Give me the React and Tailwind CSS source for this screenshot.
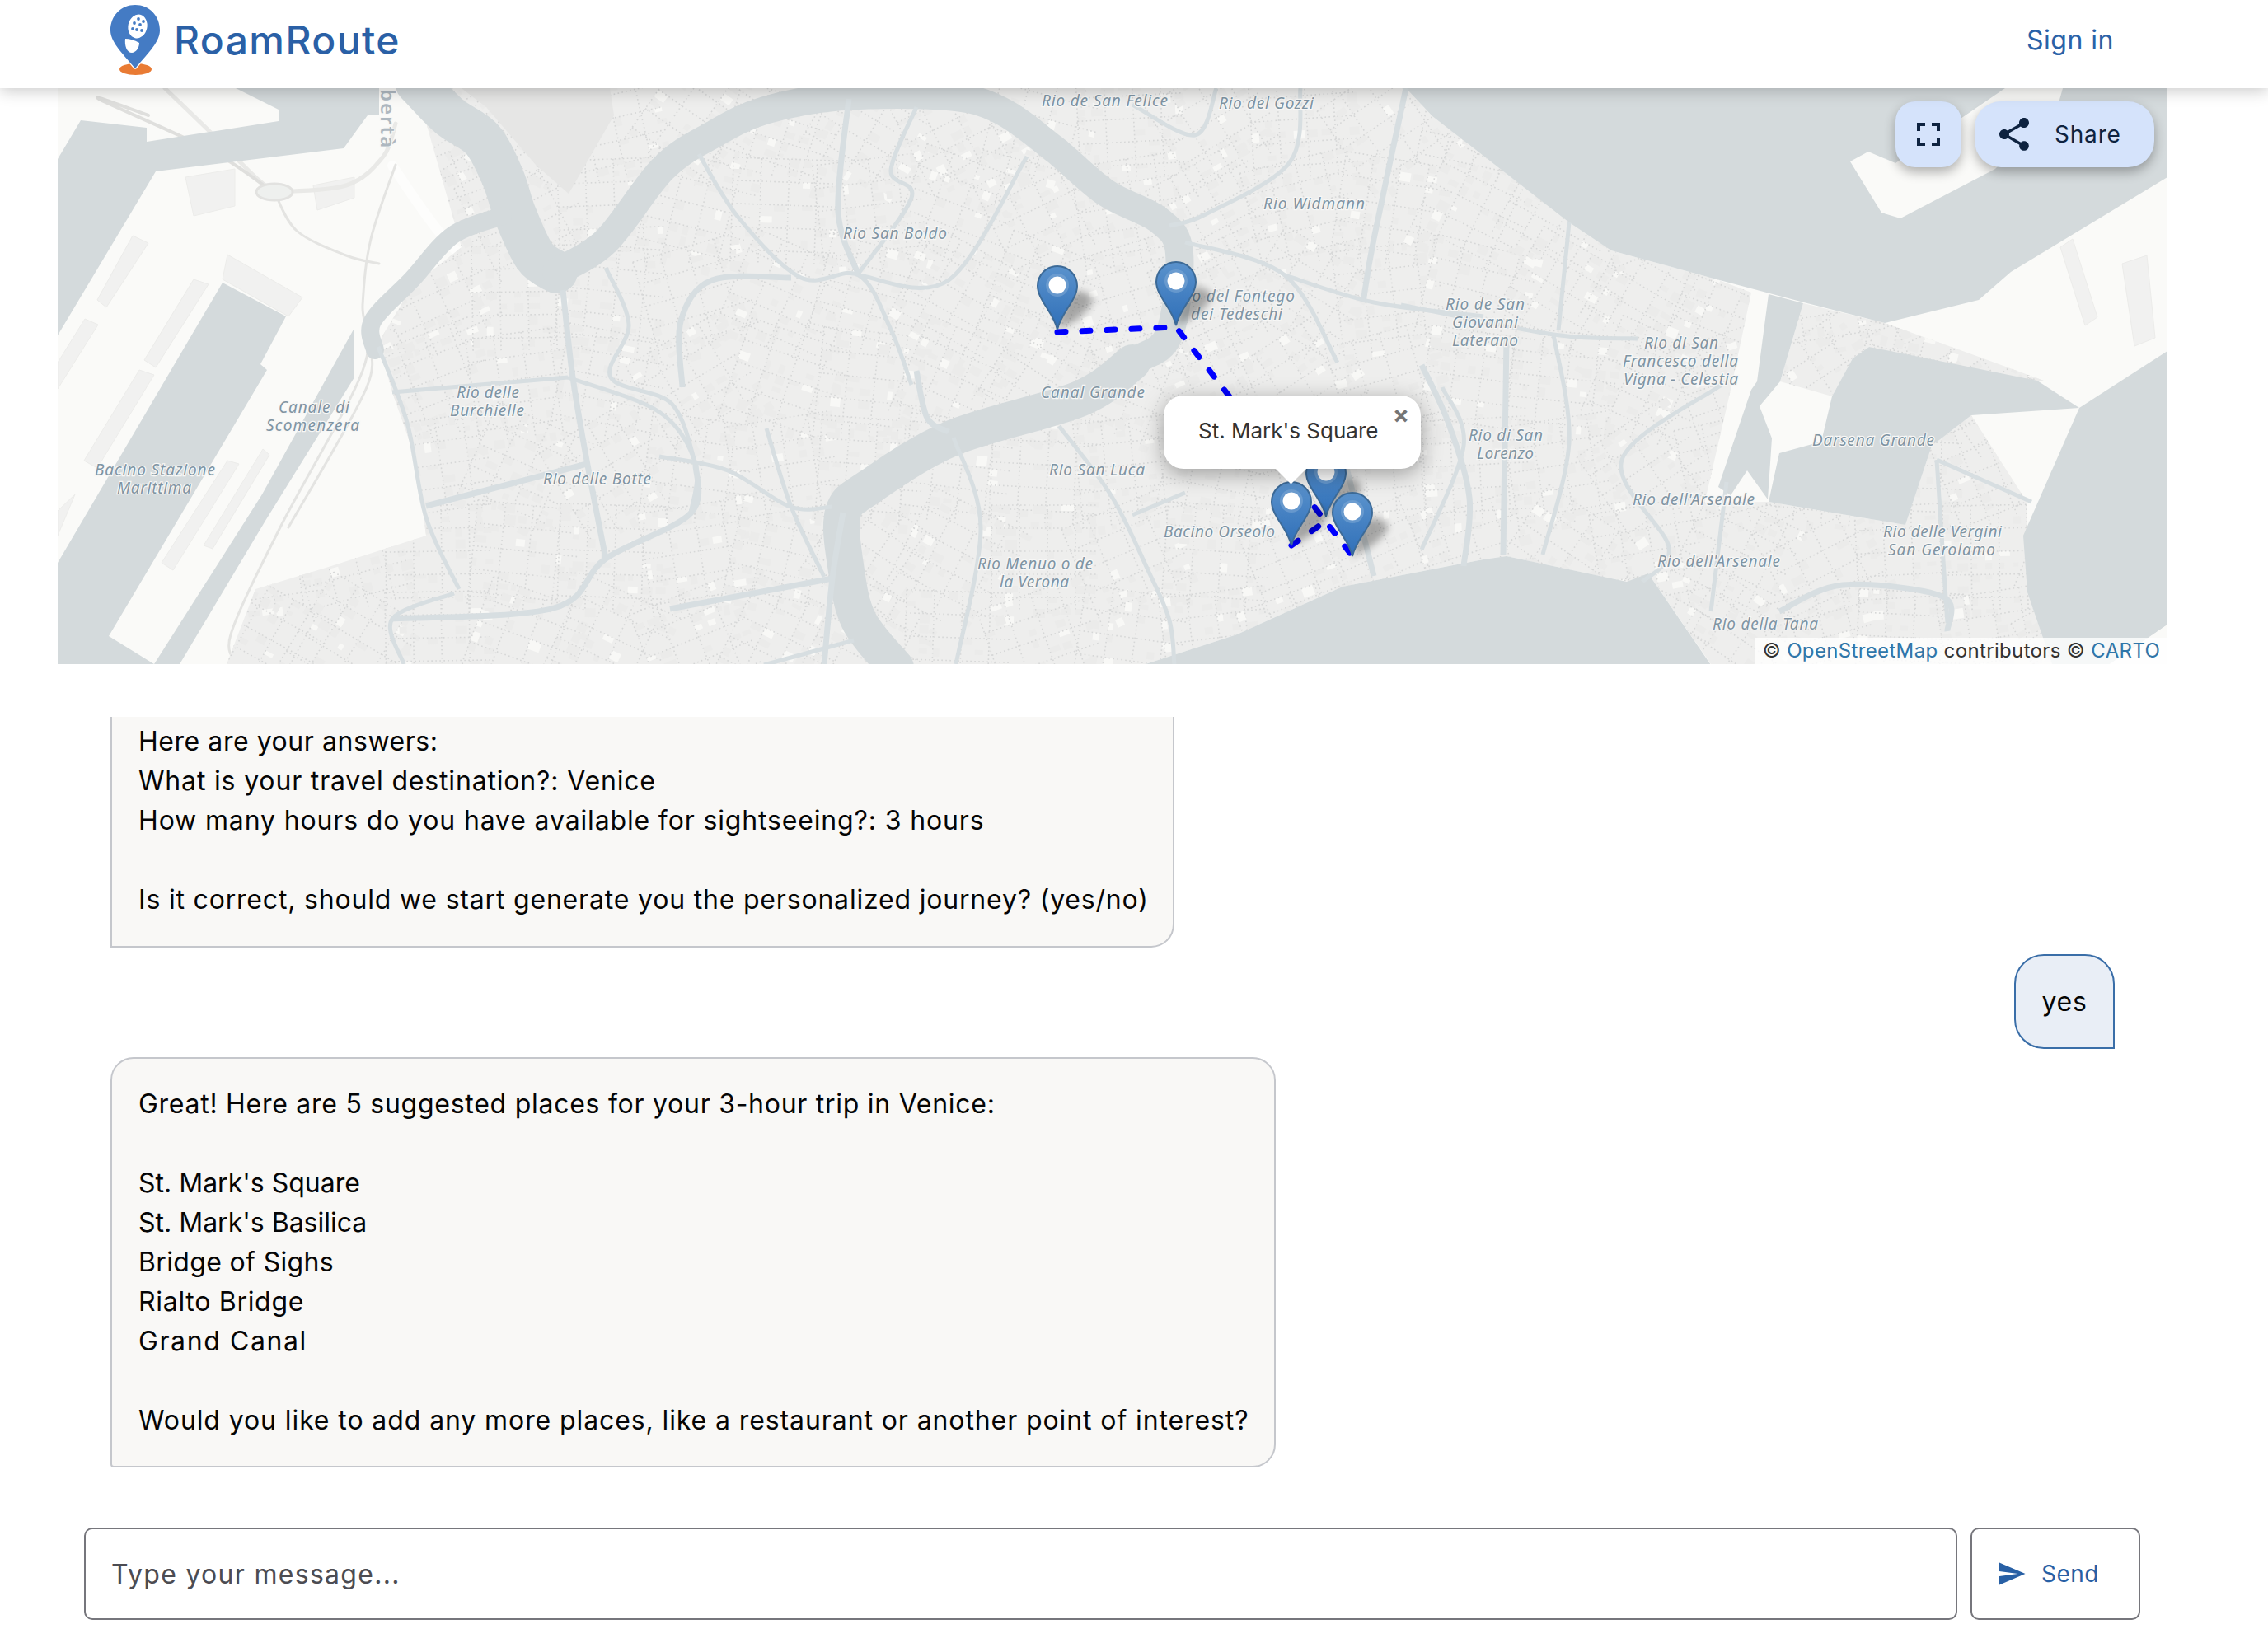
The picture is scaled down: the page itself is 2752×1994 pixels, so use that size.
// page coordinates are used all over the map drawing, the svg viewBox starts at the map's top left
const smooth = (pts) => {
  let d = `M${pts[0][0]} ${pts[0][1]}`;
  for (let i = 0; i < pts.length - 1; i++) {
    const p0 = pts[i - 1] || pts[i];
    const p1 = pts[i];
    const p2 = pts[i + 1];
    const p3 = pts[i + 2] || p2;
    const c1x = p1[0] + (p2[0] - p0[0]) / 6;
    const c1y = p1[1] + (p2[1] - p0[1]) / 6;
    const c2x = p2[0] - (p3[0] - p1[0]) / 6;
    const c2y = p2[1] - (p3[1] - p1[1]) / 6;
    d += ` C${c1x.toFixed(1)} ${c1y.toFixed(1)} ${c2x.toFixed(1)} ${c2y.toFixed(1)} ${p2[0]} ${p2[1]}`;
  }
  return d;
};

const poly = (pts) => pts.map((p) => p.join(",")).join(" ");

const WATER = [
  [[286,107],[460,107],[460,140],[446,140],[417,180],[189,208],[70,407],[70,193],[98,146],[178,155],[178,172],[338,147],[338,133]],
  [[270,343],[347,384],[316,442],[324,449],[132,772],[187,806],[70,806],[70,683]],
  [[430,398],[430,458],[322,632],[218,806],[187,806],[318,600]],
  [[1706,107],[2630,107],[2630,215],[2440,330],[2401,364],[2287,392],[2185,366],[2083,339],[1955,304],[1904,270],[1738,141]],
  [[1387,807],[1501,770],[1629,712],[1800,679],[1828,675],[1974,706],[2000,696],[2076,807]],
  [[2268,421],[2472,462],[2523,495],[2392,504],[2344,541],[2312,637],[2146,609],[2159,550],[2210,536],[2223,481],[2248,435]],
  [[2146,357],[2188,368],[2160,463],[2135,493],[2150,532],[2145,606],[2120,571],[2100,601],[2085,591],[2125,473],[2132,463]],
  [[2523,495],[2630,426],[2630,758],[2560,806],[2490,806],[2460,719],[2455,650]],
];

const THICK = [
  { w: 52, pts: [[505,100],[545,141],[585,169],[610,215],[625,260],[649,311],[675,330]] },
  { w: 34, pts: [[675,330],[735,293],[804,205],[864,164],[928,134],[1023,117],[1150,117],[1214,134],[1278,180],[1342,234],[1406,267],[1431,307],[1418,407],[1374,440],[1310,484]] },
  { w: 44, pts: [[1374,440],[1310,484],[1157,531],[1055,591],[1023,622],[1026,686],[1042,753],[1087,810]] },
  { w: 22, pts: [[455,425],[452,390],[500,339],[550,285],[610,262]] },
];

const CANALS = [
  [[683,352],[695,458],[712,559],[735,678]],
  [[459,421],[494,513],[517,628],[557,715]],
  [[476,476],[689,458]],
  [[517,614],[712,563]],
  [[735,325],[763,394],[741,458],[815,490],[844,563]],
  [[689,458],[800,500],[844,563],[838,623]],
  [[476,751],[672,738],[735,678],[838,623],[844,563]],
  [[490,806],[476,751],[551,720]],
  [[848,187],[896,264],[972,337],[1042,334],[1081,400],[1106,467]],
  [[1030,120],[1017,257],[1042,334]],
  [[1112,130],[1081,207],[1106,240],[1040,334]],
  [[1246,190],[1151,340],[1042,334]],
  [[960,337],[864,340],[826,390],[828,470]],
  [[1476,107],[1450,164],[1374,127]],
  [[1578,107],[1565,197],[1463,260],[1419,274]],
  [[1706,107],[1667,290],[1654,367]],
  [[1559,334],[1667,367],[1800,384]],
  [[1438,294],[1559,334],[1623,440]],
  [[1112,450],[1125,507],[1151,524]],
  [[1285,517],[1348,601],[1393,692],[1419,753],[1425,807]],
  [[800,554],[883,571],[959,615],[1010,615]],
  [[813,739],[1010,702]],
  [[1036,777],[927,807]],
  [[1438,598],[1374,625]],
  [[1634,568],[1667,699]],
  [[1750,470],[1776,541],[1725,667]],
  [[1700,370],[1885,406],[1987,411]],
  [[1828,411],[1824,673]],
  [[1885,406],[1904,536],[1872,673]],
  [[1904,270],[1891,401]],
  [[1725,443],[1757,512],[1783,604],[1776,687]],
  [[2089,467],[1968,558],[2025,664],[1993,706]],
  [[2095,585],[2076,742]],
  [[2159,742],[2236,710],[2357,724],[2363,766]],
  [[2350,558],[2465,609]],
  [[2350,558],[2363,756]],
  [[1000,806],[1010,702],[1023,622]],
  [[1157,531],[1190,640],[1160,806]],
  [[930,520],[960,615],[1000,700]],
];

const URBAN = [
  [[505,107],[1706,107],[1738,141],[1904,270],[1955,304],[2083,339],[2125,355],[2100,473],[2050,690],[1974,706],[1828,675],[1800,679],[1629,712],[1501,770],[1387,807],[275,806],[310,715],[402,687],[517,650],[505,559],[476,476],[459,416],[500,348],[560,300]],
  [[2000,696],[2060,610],[2146,609],[2312,637],[2344,541],[2392,504],[2460,610],[2460,719],[2490,806],[2076,806]],
  [[2188,368],[2287,392],[2401,433],[2480,462],[2440,468],[2268,421],[2248,435],[2223,481],[2160,463]],
  [[2540,566],[2560,559],[2610,630],[2625,709],[2610,758],[2500,778],[2485,689],[2490,630]],
];

const ISLANDS = [
  [[2245,196],[2267,184],[2300,198],[2433,107],[2503,107],[2497,128],[2421,205],[2306,265],[2283,258]],
  [[2630,758],[2630,806],[2560,806]],
];

const WAREHOUSES = [
  [[161,286],[180,295],[129,373],[118,364]],
  [[235,339],[253,345],[189,446],[175,437]],
  [[103,387],[119,394],[70,472],[70,440]],
  [[169,449],[187,455],[118,568],[102,559]],
  [[276,559],[290,563],[210,692],[196,683]],
  [[319,545],[327,552],[258,666],[247,662]],
  [[276,309],[367,361],[350,384],[270,339]],
  [[225,215],[285,205],[285,250],[235,262]],
  [[380,225],[430,215],[430,240],[385,255]],
  [[70,620],[91,600],[70,650]],
  [[2500,300],[2515,290],[2545,385],[2530,395]],
  [[2575,320],[2605,310],[2615,410],[2590,420]],
  [[2380,300],[2470,235],[2482,250],[2392,320]],
];

const ROADS = [
  { w: 12, c: "#fdfdfc", pts: [[476,201],[540,290],[626,371]] },
  { w: 5, c: "#e9e9e7", pts: [[200,107],[260,165],[310,215],[333,233]] },
  { w: 5, c: "#e9e9e7", pts: [[333,233],[420,225],[465,190],[480,150]] },
  { w: 3, c: "#e4e4e2", pts: [[480,200],[450,290],[440,370],[440,450],[340,640],[280,770],[290,806]] },
  { w: 3, c: "#e4e4e2", pts: [[500,330],[450,400],[445,470],[350,640]] },
  { w: 3, c: "#e4e4e2", pts: [[333,233],[360,280],[420,310],[460,320]] },
  { w: 4, c: "#dfdfdd", pts: [[180,140],[120,120],[260,185],[340,240]] },
];

// seeded so that the city blocks stay the same from run to run
const makeRng = (seed) => () => {
  seed |= 0;
  seed = (seed + 0x6d2b79f5) | 0;
  let t = Math.imul(seed ^ (seed >>> 15), 1 | seed);
  t = (t + Math.imul(t ^ (t >>> 7), 61 | t)) ^ t;
  return ((t ^ (t >>> 14)) >>> 0) / 4294967296;
};

const makePatches = () => {
  const rand = makeRng(11);
  const out = [];
  for (let gx = 270; gx < 2640; gx += 105) {
    for (let gy = 100; gy < 820; gy += 105) {
      const angle = Math.round(rand() * 70 - 35);
      let pale = "";
      let dark = "";
      let dots = "";
      for (let x = gx - 12; x < gx + 118; x += 17) {
        for (let y = gy - 12; y < gy + 118; y += 14) {
          const r = rand();
          const w = 6 + Math.round(rand() * 9);
          const h = 5 + Math.round(rand() * 7);
          const rect = `M${x} ${y}h${w}v${h}h${-w}z`;
          if (r < 0.05) pale += rect;
          else if (r < 0.3) dark += rect;
        }
      }
      for (let x = gx - 12; x < gx + 118; x += 34) dots += `M${x} ${gy - 12}v130`;
      for (let y = gy - 12; y < gy + 118; y += 28) dots += `M${gx - 12} ${y}h130`;
      out.push({ key: `${gx}-${gy}`, transform: `rotate(${angle} ${gx + 52} ${gy + 52})`, pale, dark, dots });
    }
  }
  return out;
};

const PATCHES = makePatches();

const LABELS = [
  ["Rio de San Felice", 1264, 129, 153],
  ["Rio del Gozzi", 1479, 132, 115],
  ["Rio Widmann", 1533, 254, 123],
  ["Rio San Boldo", 1023, 290, 126],
  ["Rio del Fontego", 1429, 366, 142],
  ["dei Tedeschi", 1445, 388, 111],
  ["Canal Grande", 1263, 483, 126],
  ["Rio San Luca", 1273, 577, 116],
  ["Bacino Orseolo", 1412, 652, 135],
  ["Rio Menuo o de", 1186, 691, 140],
  ["la Verona", 1213, 713, 84],
  ["Canale di", 338, 501, 86],
  ["Scomenzera", 323, 523, 113],
  ["Rio delle", 554, 483, 76],
  ["Burchielle", 546, 505, 90],
  ["Rio delle Botte", 659, 588, 131],
  ["Bacino Stazione", 115, 577, 146],
  ["Marittima", 142, 599, 90],
  ["Rio de San", 1754, 376, 96],
  ["Giovanni", 1762, 398, 80],
  ["Laterano", 1762, 420, 80],
  ["Rio di San", 1995, 423, 90],
  ["Francesco della", 1969, 445, 140],
  ["Vigna - Celestia", 1970, 467, 139],
  ["Rio di San", 1782, 535, 90],
  ["Lorenzo", 1792, 557, 69],
  ["Darsena Grande", 2199, 541, 148],
  ["Rio dell'Arsenale", 1981, 613, 148],
  ["Rio delle Vergini", 2285, 652, 144],
  ["San Gerolamo", 2291, 674, 130],
  ["Rio dell'Arsenale", 2011, 688, 149],
  ["Rio della Tana", 2078, 764, 128],
];

// each line gets its own tracking, the installed font runs a bit differently from the original
const FIRST_BUBBLE = [
  ["Here are your answers:", "tracking-[0.55px]"],
  ["What is your travel destination?: Venice", "tracking-[0.83px]"],
  ["How many hours do you have available for sightseeing?: 3 hours", "tracking-[0.85px]"],
  null,
  ["Is it correct, should we start generate you the personalized journey? (yes/no)", "tracking-[0.81px]"],
];

const SECOND_BUBBLE = [
  ["Great! Here are 5 suggested places for your 3-hour trip in Venice:", "tracking-[0.73px]"],
  null,
  ["St. Mark's Square", "tracking-[0px]"],
  ["St. Mark's Basilica", "tracking-[0px]"],
  ["Bridge of Sighs", "tracking-[0.35px]"],
  ["Rialto Bridge", "tracking-[0.7px]"],
  ["Grand Canal", "tracking-[1.6px]"],
  null,
  ["Would you like to add any more places, like a restaurant or another point of interest?", "tracking-[0.9px]"],
];

const Lines = ({ lines }) =>
  lines.map((line, i) =>
    line ? (
      <div key={i} className={line[1]}>
        {line[0]}
      </div>
    ) : (
      <div key={i} className="h-12" />
    )
  );

const Marker = ({ x, y }) => (
  <g transform={`translate(${x} ${y})`}>
    <path d="M0 0 L8 -38 Q30 -56 44 -36 Q34 -14 0 0Z" fill="#000" opacity="0.3" filter="url(#pinShadow)" />
    <path
      d="M0 0 C-4 -20 -24 -36 -24 -53 A24 24 0 1 1 24 -53 C24 -36 4 -20 0 0Z"
      fill="url(#pinFill)"
      stroke="#3c6a97"
      strokeWidth="2"
    />
    <circle cx="0" cy="-54" r="14" fill="#7fa9d6" opacity="0.55" />
    <circle cx="0" cy="-54" r="10.5" fill="#fff" />
  </g>
);

const MapDrawing = () => (
  <svg viewBox="70 107 2560 699" className="block h-full w-full bg-[#fafaf8]">
    <defs>
      <linearGradient id="pinFill" x1="0" y1="0" x2="0" y2="1">
        <stop offset="0" stopColor="#5a92cc" />
        <stop offset="1" stopColor="#2f6fb8" />
      </linearGradient>
      <filter id="pinShadow" x="-50%" y="-50%" width="200%" height="200%">
        <feGaussianBlur stdDeviation="5" />
      </filter>
      <clipPath id="urbanClip">
        {URBAN.map((pts, i) => (
          <polygon key={i} points={poly(pts)} />
        ))}
      </clipPath>
    </defs>

    {WAREHOUSES.map((pts, i) => (
      <polygon key={i} points={poly(pts)} fill="#f1f1f0" stroke="#ececea" />
    ))}
    {ROADS.map((r, i) => (
      <path key={i} d={smooth(r.pts)} fill="none" stroke={r.c} strokeWidth={r.w} strokeLinecap="round" />
    ))}
    <ellipse cx="333" cy="233" rx="22" ry="10" fill="#eef0ee" stroke="#e2e2e0" strokeWidth="3" />

    {URBAN.map((pts, i) => (
      <polygon key={i} points={poly(pts)} fill="#eeeeed" />
    ))}
    <g clipPath="url(#urbanClip)">
      {PATCHES.map((p) => (
        <g key={p.key} transform={p.transform}>
          <path d={p.dark} fill="#ebebea" />
          <path d={p.pale} fill="#f8f8f6" />
          <path d={p.dots} fill="none" stroke="#d6d7d7" strokeWidth="1.6" strokeDasharray="1.6 3.4" />
        </g>
      ))}
    </g>
    <polygon points="560,107 740,107 745,140 690,235 650,200 590,130" fill="#e6e6e5" />

    {WATER.map((pts, i) => (
      <polygon key={i} points={poly(pts)} fill="#d4dadc" />
    ))}
    {THICK.map((c, i) => (
      <path key={i} d={smooth(c.pts)} fill="none" stroke="#d4dadc" strokeWidth={c.w} strokeLinecap="round" />
    ))}
    {CANALS.map((pts, i) => (
      <path key={i} d={smooth(pts)} fill="none" stroke="#d7dee1" strokeWidth={i % 3 === 0 ? 7 : 5} strokeLinejoin="round" />
    ))}
    {ISLANDS.map((pts, i) => (
      <polygon key={i} points={poly(pts)} fill="#fafaf8" />
    ))}

    {LABELS.map(([text, x, y, w], i) => (
      <text
        key={i}
        x={x}
        y={y}
        textLength={w}
        lengthAdjust="spacing"
        fontFamily="'Noto Sans', sans-serif"
        fontStyle="italic"
        fontSize="19"
        fill="#7f94a3"
        stroke="#f7f7f6"
        strokeWidth="2.5"
        paintOrder="stroke"
      >
        {text}
      </text>
    ))}
    <text
      transform="translate(462 108) rotate(90)"
      fontFamily="'Noto Sans', sans-serif"
      fontWeight="600"
      fontSize="24"
      letterSpacing="2"
      fill="#aeb8c0"
      stroke="#f7f7f6"
      strokeWidth="2"
      paintOrder="stroke"
    >
      bertà
    </text>

    <path d="M1283 403 L1427 397 L1641 675" fill="none" stroke="#0000ff" strokeWidth="7" strokeLinecap="round" strokeLinejoin="round" strokeDasharray="10 20" />
    <path d="M1567 662 L1612 630" fill="none" stroke="#0000ff" strokeWidth="7" strokeLinecap="round" strokeDasharray="10 20" />

    <Marker x={1283} y={400} />
    <Marker x={1427} y={395} />
    <Marker x={1609} y={627} />
    <Marker x={1567} y={662} />
    <Marker x={1641} y={675} />
  </svg>
);

const Logo = () => (
  <svg viewBox="0 0 60 85" className="h-[85px] w-[60px]">
    <ellipse cx="30.5" cy="78" rx="19.5" ry="7" fill="#e97b34" />
    <path
      d="M30 0 C47 0 60 13 60 31 C60 46 42 62 31 76 Q30 77 29 76 C18 62 0 46 0 31 C0 13 13 0 30 0Z"
      fill="#447bc4"
      stroke="#fff"
      strokeWidth="2.5"
      paintOrder="stroke"
    />
    <g transform="rotate(12 33 26)">
      <ellipse cx="33" cy="26" rx="11.5" ry="14.5" fill="#fff" />
    </g>
    <path d="M18 41 Q26 41 35 46 C35 53 30 58 26 58 C20 58 17 50 18 41Z" fill="#fff" />
    {[[34,17],[29,22],[36,24],[32,30],[38,31],[27,29],[40,20]].map(([cx, cy], i) => (
      <circle key={i} cx={cx} cy={cy} r="1.9" fill="#447bc4" />
    ))}
  </svg>
);

const Header = () => (
  <header className="relative z-20 flex h-[107px] items-start justify-between bg-white pl-[134px] pr-[187px] shadow-[0_3px_18px_rgba(0,0,0,0.22)]">
    <div className="mt-[6px] flex items-center gap-[17px]">
      <Logo />
      <span className="text-[48px] font-medium leading-none tracking-[1.4px] text-[#2a60a6]">RoamRoute</span>
    </div>
    <a className="mt-[29px] text-[32px] leading-[40px] tracking-[0.5px] text-[#2a62a8]">Sign in</a>
  </header>
);

const MapPanel = () => (
  <section className="relative ml-[70px] h-[699px] w-[2560px] overflow-hidden">
    <MapDrawing />

    <div className="absolute left-[2230px] top-[16px] flex gap-4">
      <button className="flex h-[80px] w-[80px] items-center justify-center rounded-[24px] bg-[#d5e3fb] shadow-[0_6px_14px_rgba(0,0,0,0.3)]">
        <svg viewBox="0 0 24 24" className="h-12 w-12 fill-[#0e2340]">
          <path d="M7 14H5v5h5v-2H7v-3zm-2-4h2V7h3V5H5v5zm12 7h-3v2h5v-5h-2v3zM14 5v2h3v3h2V5h-5z" />
        </svg>
      </button>
      <button className="flex h-[80px] w-[218px] items-center rounded-[32px] bg-[#d5e3fb] pl-6 text-[28px] tracking-[0.8px] text-[#0e2340] shadow-[0_6px_14px_rgba(0,0,0,0.3)]">
        <svg viewBox="0 0 24 24" className="h-12 w-12 fill-[#0e2340]">
          <path d="M18 16.08c-.76 0-1.44.3-1.96.77L8.91 12.7c.05-.23.09-.46.09-.7s-.04-.47-.09-.7l7.05-4.11c.54.5 1.25.81 2.04.81 1.66 0 3-1.34 3-3s-1.34-3-3-3-3 1.34-3 3c0 .24.04.47.09.7L8.04 9.81C7.5 9.31 6.79 9 6 9c-1.66 0-3 1.34-3 3s1.34 3 3 3c.79 0 1.5-.31 2.04-.81l7.12 4.16c-.05.21-.08.43-.08.65 0 1.61 1.31 2.92 2.92 2.92 1.61 0 2.92-1.31 2.92-2.92s-1.31-2.92-2.92-2.92z" />
        </svg>
        <span className="ml-[25px]">Share</span>
      </button>
    </div>

    <div className="absolute left-[1342px] top-[373px] h-[89px] w-[312px] rounded-[24px] bg-white shadow-[0_6px_26px_rgba(0,0,0,0.35)]">
      <div className="absolute left-[141px] top-[75px] h-[27px] w-[27px] rotate-45 bg-white" />
      <span className="absolute left-[42px] top-[25px] text-[26px] leading-[36px] text-[#333333]">St. Mark's Square</span>
      <span className="absolute right-[14px] top-[8px] text-[30px] font-bold leading-[30px] text-[#757575]">×</span>
    </div>

    <div className="absolute bottom-0 right-0 flex h-[32px] w-[500px] items-center justify-center bg-white/80 text-[24px] tracking-[0.35px] text-[#333333]">
      <span>
        © <a className="text-[#2f76a9]">OpenStreetMap</a> contributors © <a className="text-[#2f76a9]">CARTO</a>
      </span>
    </div>
  </section>
);

const Chat = () => (
  <div className="mt-16 flex h-[912px] flex-col overflow-hidden pl-[134px] pr-[186px] text-[32px] leading-[48px] text-[#050505]">
    <div className="w-[1291px] rounded-br-[28px] border-x-2 border-b-2 border-[#c5c7cc] bg-[#f9f8f6] pb-[32px] pl-[32px] pr-[20px] pt-[6px]">
      <Lines lines={FIRST_BUBBLE} />
    </div>
    <div className="mt-2 flex h-[115px] w-[122px] items-center justify-center self-end rounded-[36px] rounded-br-none border-2 border-[#3a6ea8] bg-[#e9eef6] tracking-[0.7px]">
      yes
    </div>
    <div className="mt-[10px] w-[1414px] rounded-[28px] rounded-bl-[4px] border-2 border-[#c5c7cc] bg-[#f9f8f6] py-[31px] pl-[32px] pr-[20px]">
      <Lines lines={SECOND_BUBBLE} />
    </div>
  </div>
);

const InputBar = () => (
  <div className="mt-[72px] flex h-[112px] gap-4 pl-[102px] pr-[155px]">
    <input
      type="text"
      placeholder="Type your message..."
      className="h-full flex-1 rounded-[10px] border-2 border-[#76767c] bg-white pl-[31px] text-[32px] tracking-[1.3px] text-[#111] outline-none placeholder:text-[#4c4c52]"
    />
    <button className="flex h-full w-[206px] items-center rounded-[10px] border-2 border-[#76767c] bg-white pl-[30px] text-[28px] tracking-[0.5px] text-[#2860a5]">
      <svg viewBox="0 0 24 24" className="h-9 w-9 fill-[#2860a5]">
        <path d="M2.01 21 23 12 2.01 3 2 10l15 2-15 2z" />
      </svg>
      <span className="ml-[18px]">Send</span>
    </button>
  </div>
);

const App = () => (
  <div className="h-[1994px] overflow-hidden bg-white [font-family:Inter,sans-serif]">
    <Header />
    <MapPanel />
    <Chat />
    <InputBar />
  </div>
);

export default App;
